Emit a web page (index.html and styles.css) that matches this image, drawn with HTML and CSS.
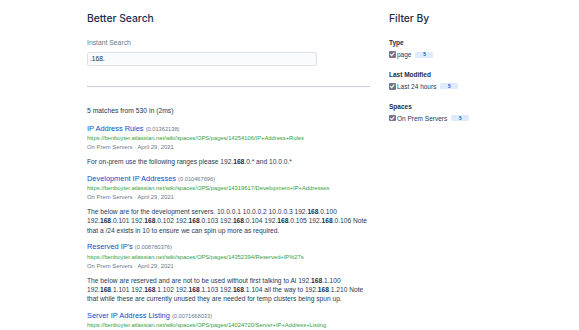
FILE: index.html
```html
<!DOCTYPE html>
<html lang="en">
<head>
<meta charset="utf-8">
<title>Better Search</title>
<link rel="stylesheet" href="styles.css">
</head>
<body>
<div class="page">
  <main class="main">
    <h1 class="heading">Better Search</h1>
    <label class="field-label" for="q">Instant Search</label>
    <input class="search" id="q" type="text" value=".168.">
    <hr class="divider">
    <p class="summary">5 matches from 530 in (2ms)</p>
    <div class="results">
      <article class="result">
        <div class="result-head"><a class="result-title" href="#">IP Address Rules</a> <span class="score">(0.01362138)</span></div>
        <div class="url">https://benboyter.atlassian.net/wiki/spaces/OPS/pages/14254106/IP+Address+Rules</div>
        <div class="meta">On Prem Servers · April 29, 2021</div>
        <p class="snippet">For on-prem use the following ranges please 192.<b>168</b>.0.* and 10.0.0.*</p>
      </article>
      <article class="result">
        <div class="result-head"><a class="result-title" href="#">Development IP Addresses</a> <span class="score">(0.010467696)</span></div>
        <div class="url">https://benboyter.atlassian.net/wiki/spaces/OPS/pages/14319617/Development+IP+Addresses</div>
        <div class="meta">On Prem Servers · April 29, 2021</div>
        <p class="snippet">The below are for the development servers. 10.0.0.1 10.0.0.2 10.0.0.3 192.<b>168</b>.0.100 192.<b>168</b>.0.101 192.<b>168</b>.0.102 192.<b>168</b>.0.103 192.<b>168</b>.0.104 192.<b>168</b>.0.105 192.<b>168</b>.0.106 Note that a /24 exists in 10 to ensure we can spin up more as required.</p>
      </article>
      <article class="result">
        <div class="result-head"><a class="result-title" href="#">Reserved IP's</a> <span class="score">(0.008780376)</span></div>
        <div class="url">https://benboyter.atlassian.net/wiki/spaces/OPS/pages/14352394/Reserved+IP%27s</div>
        <div class="meta">On Prem Servers · April 29, 2021</div>
        <p class="snippet">The below are reserved and are not to be used without first talking to Al 192.<b>168</b>.1.100 192.<b>168</b>.1.101 192.<b>168</b>.1.102 192.<b>168</b>.1.103 192.<b>168</b>.1.104 all the way to 192.<b>168</b>.1.210 Note that while these are currently unused they are needed for temp clusters being spun up.</p>
      </article>
      <article class="result">
        <div class="result-head"><a class="result-title" href="#">Server IP Address Listing</a> <span class="score">(0.0071668033)</span></div>
        <div class="url">https://benboyter.atlassian.net/wiki/spaces/OPS/pages/14024720/Server+IP+Address+Listing</div>
        <div class="meta">On Prem Servers · April 29, 2021</div>
      </article>
    </div>
  </main>
  <aside class="sidebar">
    <h1 class="heading">Filter By</h1>
    <section class="group first">
      <h2 class="group-title">Type</h2>
      <div class="option"><span class="check"><svg viewBox="0 0 10 10"><path d="M2.3 5.2 4.2 7.1 7.8 2.9" fill="none" stroke="#fff" stroke-width="1.6" stroke-linecap="round" stroke-linejoin="round"/></svg></span><span class="option-label">page</span><span class="badge">5</span></div>
    </section>
    <section class="group">
      <h2 class="group-title">Last Modified</h2>
      <div class="option"><span class="check"><svg viewBox="0 0 10 10"><path d="M2.3 5.2 4.2 7.1 7.8 2.9" fill="none" stroke="#fff" stroke-width="1.6" stroke-linecap="round" stroke-linejoin="round"/></svg></span><span class="option-label">Last 24 hours</span><span class="badge">5</span></div>
    </section>
    <section class="group">
      <h2 class="group-title">Spaces</h2>
      <div class="option"><span class="check"><svg viewBox="0 0 10 10"><path d="M2.3 5.2 4.2 7.1 7.8 2.9" fill="none" stroke="#fff" stroke-width="1.6" stroke-linecap="round" stroke-linejoin="round"/></svg></span><span class="option-label">On Prem Servers</span><span class="badge">5</span></div>
    </section>
  </aside>
</div>
</body>
</html>
```

FILE: styles.css
```css
html, body {
  margin: 0;
  padding: 0;
  background: #ffffff;
  overflow: hidden;
}

body {
  font-family: "Liberation Sans", Arial, sans-serif;
  color: #172b4d;
}

.page {
  display: flex;
  gap: 18px;
  padding: 12px 0 0 87px;
}

.main {
  width: 283px;
  flex: none;
}

.heading {
  margin: 0;
  font-family: Inter, "Liberation Sans", Arial, sans-serif;
  font-size: 10.3px;
  line-height: 13px;
  font-weight: 500;
  color: #172b4d;
}

.field-label {
  display: block;
  margin-top: 14.3px;
  font-size: 6.8px;
  line-height: 8px;
  color: #6b778c;
}

.search {
  display: block;
  box-sizing: border-box;
  width: 230px;
  height: 14px;
  margin: 4.7px 0 0;
  padding: 0 2px;
  border: 1px solid #dfe1e6;
  border-radius: 2px;
  background: #fafbfc;
  font-family: "Liberation Sans", Arial, sans-serif;
  font-size: 6.6px;
  color: #172b4d;
  outline: none;
}

.divider {
  margin: 20px 0 0;
  height: 0;
  border: 0;
  border-top: 1px solid #c9ccd1;
}

.summary {
  margin: 19.4px 0 0;
  font-size: 6.8px;
  line-height: 9.3px;
  color: #253858;
}

.results {
  margin-top: 8px;
}

.result {
  margin-bottom: 7.35px;
}

.result-head {
  font-size: 7.4px;
  line-height: 9.3px;
  white-space: nowrap;
}

.result-title {
  color: #0052cc;
  text-decoration: none;
}

.score {
  font-size: 5.7px;
  color: #6b778c;
}

.url {
  font-size: 5.8px;
  line-height: 9.3px;
  color: #36a03c;
  white-space: nowrap;
}

.meta {
  font-size: 5.9px;
  line-height: 9.3px;
  color: #6b778c;
}

.snippet {
  margin: 4.4px 0 0;
  font-size: 6.65px;
  line-height: 9.35px;
  color: #253858;
}

.snippet b {
  font-weight: bold;
  color: #172b4d;
}

.sidebar {
  width: 100px;
  flex: none;
  padding-left: 1px;
}

.group {
  margin-top: 12.3px;
}

.group.first {
  margin-top: 14.3px;
}

.group-title {
  margin: 0;
  font-size: 6.5px;
  line-height: 8px;
  font-weight: bold;
  color: #172b4d;
}

.option {
  display: flex;
  align-items: center;
  height: 8px;
  margin-top: 3.4px;
  font-size: 6.5px;
  white-space: nowrap;
}

.check {
  display: flex;
  width: 6.5px;
  height: 6.5px;
  margin-right: 1.5px;
  border-radius: 1px;
  background: #6f7789;
}

.check svg {
  width: 100%;
  height: 100%;
}

.option-label {
  color: #253858;
}

.badge {
  display: flex;
  align-items: center;
  justify-content: center;
  width: 18px;
  height: 6px;
  margin-left: 4px;
  border-radius: 1.5px;
  background: #deebff;
  color: #0052cc;
  font-size: 4.6px;
  font-weight: bold;
}
```
